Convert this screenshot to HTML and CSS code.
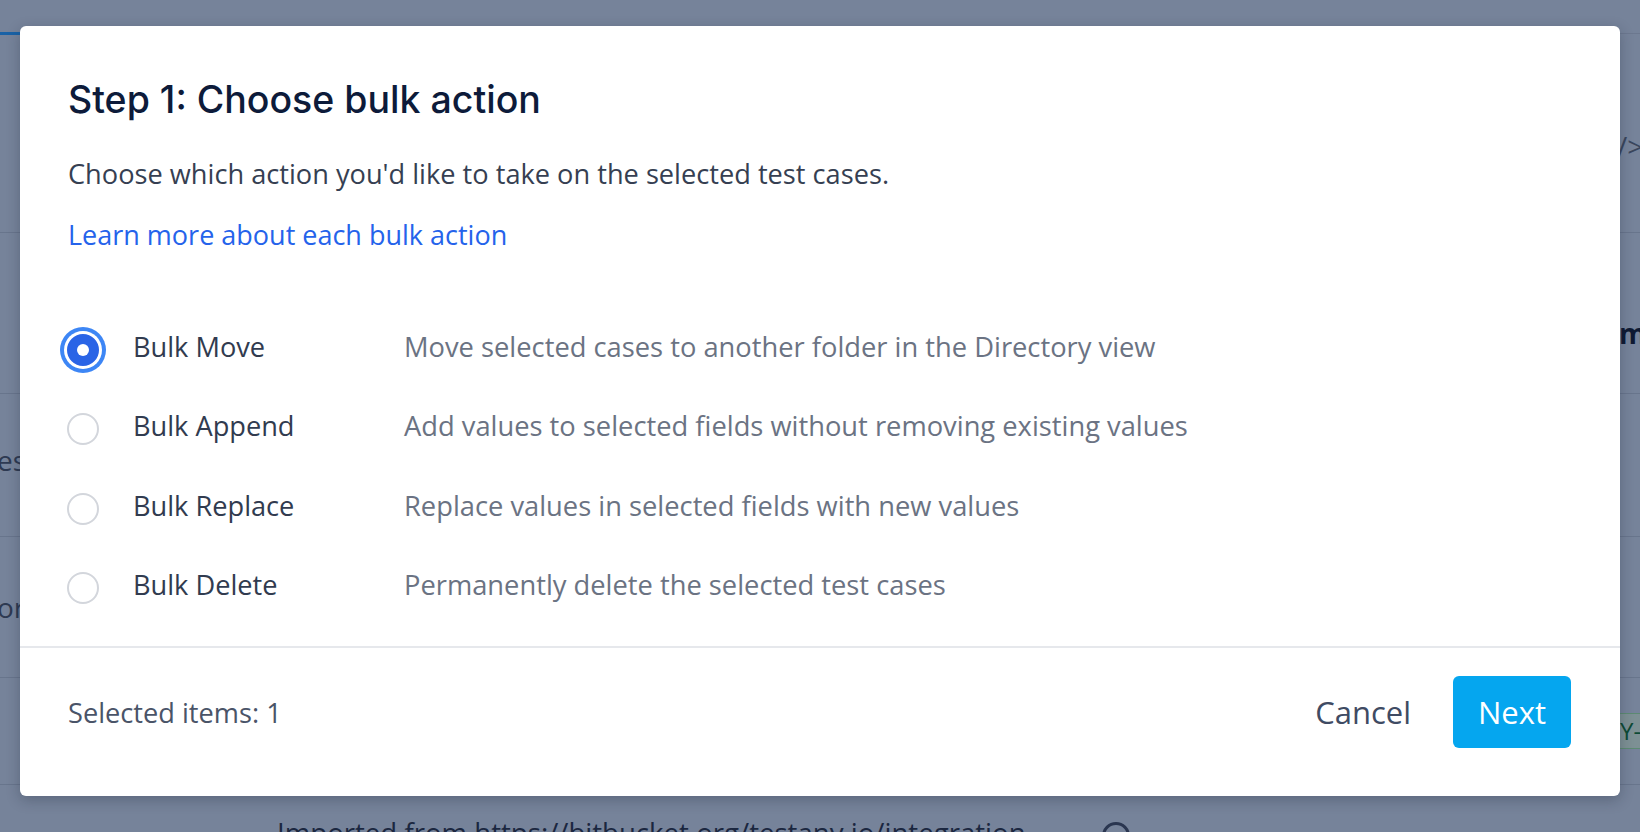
FILE: index.html
```html
<!DOCTYPE html>
<html lang="en">
<head>
<meta charset="utf-8">
<title>Bulk action</title>
<link rel="stylesheet" href="styles.css">
</head>
<body>
<div class="page">
  <div class="page-top"><span class="tab-line"></span></div>
  <div class="prow prow-1"><span class="frag frag-code">/&gt;</span></div>
  <div class="prow prow-2"><span class="frag frag-bold">m-</span></div>
  <div class="prow prow-3"><span class="frag frag-left">es</span></div>
  <div class="prow prow-4"><span class="frag frag-left">or</span></div>
  <div class="prow prow-5"><span class="badge">Y-03</span></div>
  <div class="prow prow-6">
    <span class="frag-import">Imported from https://bitbucket.org/testany.io/integration</span>
    <span class="frag-circle"></span>
  </div>
</div>

<div class="modal" role="dialog">
  <div class="modal-body">
    <h1 class="title">Step 1: Choose bulk action</h1>
    <p class="desc">Choose which action you'd like to take on the selected test cases.</p>
    <a class="link" href="#">Learn more about each bulk action</a>
    <div class="options">
      <div class="option">
        <span class="radio checked"></span>
        <span class="opt-label">Bulk Move</span>
        <span class="opt-desc">Move selected cases to another folder in the Directory view</span>
      </div>
      <div class="option">
        <span class="radio"></span>
        <span class="opt-label">Bulk Append</span>
        <span class="opt-desc">Add values to selected fields without removing existing values</span>
      </div>
      <div class="option">
        <span class="radio"></span>
        <span class="opt-label">Bulk Replace</span>
        <span class="opt-desc">Replace values in selected fields with new values</span>
      </div>
      <div class="option">
        <span class="radio"></span>
        <span class="opt-label">Bulk Delete</span>
        <span class="opt-desc">Permanently delete the selected test cases</span>
      </div>
    </div>
  </div>
  <div class="footer">
    <span class="selected">Selected items: 1</span>
    <div class="actions">
      <button class="btn-cancel">Cancel</button>
      <button class="btn-next">Next</button>
    </div>
  </div>
</div>
</body>
</html>
```

FILE: styles.css
```css
html, body {
  margin: 0;
  padding: 0;
}
body {
  width: 1640px;
  height: 832px;
  overflow: hidden;
  position: relative;
  background: #76839a;
  font-family: "Open Sans", Lato, sans-serif;
}

/* dimmed page behind the dialog */
.page {
  display: flex;
  flex-direction: column;
  height: 832px;
  overflow: hidden;
}
.page-top {
  flex-shrink: 0;
  height: 33px;
  border-bottom: 1px solid #6c788f;
  position: relative;
}
.tab-line {
  position: absolute;
  left: 0;
  bottom: -2px;
  width: 20px;
  height: 3px;
  background: #1a62a6;
}
.prow {
  flex-shrink: 0;
  border-bottom: 1px solid #68758c;
  display: flex;
  align-items: center;
  justify-content: flex-start;
  box-sizing: border-box;
  white-space: nowrap;
}
.prow-1 { height: 199px; padding-top: 25px; }
.prow-2 { height: 161px; padding-top: 39px; }
.prow-3 { height: 143px; padding-bottom: 10px; }
.prow-4 { height: 141px; }
.prow-5 { height: 107px; }
.prow-6 { flex: 1 1 auto; min-height: 0; border-bottom: 0; align-items: flex-start; }
.frag {
  font-size: 28px;
  color: #2e3a52;
}
.frag-code { color: #3a465d; margin-left: 1617px; }
.frag-bold { font-weight: 700; color: #0f1a33; margin-left: 1619px; }
.frag-left { margin-left: -3px; }
.badge {
  margin-left: 1611px;
  font-size: 24px;
  line-height: 30px;
  color: #0d4a35;
  background: #7d9094;
  border: 1px solid #5c8a72;
  padding: 2px 8px;
}
.frag-import {
  flex-shrink: 0;
  margin: 28px 0 0 277px;
  font-size: 27.6px;
  color: #1b2740;
}
.frag-circle {
  flex-shrink: 0;
  margin: 37px 0 0 76px;
  width: 22px;
  height: 22px;
  border: 3px solid #2a3650;
  border-radius: 50%;
}

/* dialog */
.modal {
  position: absolute;
  left: 20px;
  top: 26px;
  width: 1600px;
  height: 770px;
  background: #fff;
  border-radius: 6px;
  box-shadow: 0 4px 14px rgba(20, 28, 48, 0.28);
  display: flex;
  flex-direction: column;
}
.modal-body {
  flex: 1;
  padding: 52px 48px 0 48px;
}
.title {
  margin: 0;
  font-family: Inter, "Noto Sans", sans-serif;
  font-size: 37.5px;
  line-height: 44px;
  font-weight: 500;
  color: #0d1b3a;
}
.desc {
  margin: 32px 0 0;
  font-size: 27.2px;
  line-height: 40px;
  color: #363f52;
}
.link {
  display: block;
  margin-top: 21px;
  font-size: 27px;
  line-height: 40px;
  color: #2563eb;
  text-decoration: none;
  width: max-content;
}
.options {
  margin-top: 55px;
}
.option {
  display: grid;
  grid-template-columns: 32px 237px 1fr;
  column-gap: 34px;
  align-items: center;
  height: 79.5px;
  margin-left: -1px;
}
.radio {
  width: 32px;
  height: 32px;
  box-sizing: border-box;
  border-radius: 50%;
  border: 2px solid #d3d6dc;
  background: #fff;
  position: relative;
}
.radio.checked {
  background: #2a64e6;
  border-color: #2a64e6;
  box-shadow: 0 0 0 3px #fff, 0 0 0 7px #3d86f5;
}
.radio.checked::after {
  content: "";
  position: absolute;
  left: 50%;
  top: 50%;
  width: 12px;
  height: 12px;
  margin: -6px 0 0 -6px;
  border-radius: 50%;
  background: #fff;
}
.opt-label {
  font-size: 27.2px;
  color: #313b4f;
  white-space: nowrap;
  padding-bottom: 7px;
}
.opt-desc {
  font-size: 27.3px;
  color: #6b7383;
  white-space: nowrap;
  padding-bottom: 7px;
}

.footer {
  height: 150px;
  box-sizing: border-box;
  border-top: 2px solid #e6e8ec;
  padding: 28px 49px 48px 48px;
  display: flex;
  align-items: center;
  justify-content: space-between;
}
.selected {
  font-size: 27.2px;
  color: #4a5468;
}
.actions {
  display: flex;
  align-items: center;
  gap: 42px;
}
.btn-cancel {
  font-family: inherit;
  font-size: 31px;
  color: #3f4b63;
  background: none;
  border: 0;
  padding: 0;
}
.btn-next {
  font-family: inherit;
  font-size: 31px;
  color: #fff;
  background: #05a6ef;
  border: 0;
  border-radius: 6px;
  height: 72px;
  width: 118px;
  padding: 0;
}
```
